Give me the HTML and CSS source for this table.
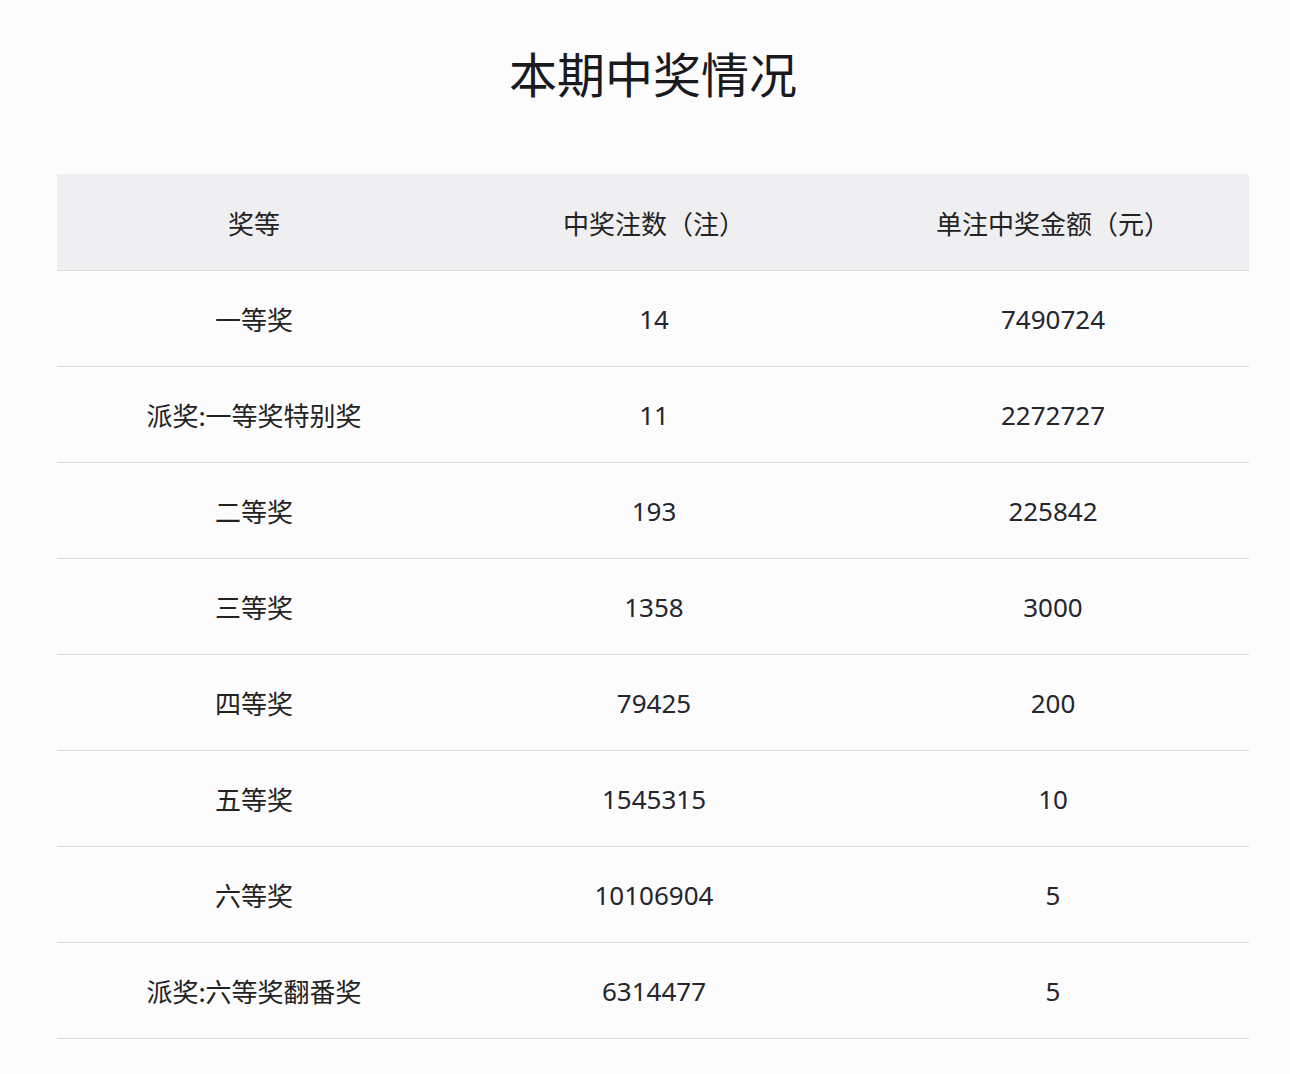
FILE: index.html
```html
<!DOCTYPE html>
<html lang="zh-CN">
<head>
<meta charset="utf-8">
<title>本期中奖情况</title>
<link rel="stylesheet" href="styles.css">
</head>
<body>
<div class="page">
  <h1 class="title">本期中奖情况</h1>
  <table class="prize-table">
    <colgroup>
      <col class="c1"><col class="c2"><col class="c3">
    </colgroup>
    <thead>
      <tr><th>奖等</th><th>中奖注数（注）</th><th>单注中奖金额（元）</th></tr>
    </thead>
    <tbody>
      <tr><td>一等奖</td><td>14</td><td>7490724</td></tr>
      <tr><td>派奖:一等奖特别奖</td><td>11</td><td>2272727</td></tr>
      <tr><td>二等奖</td><td>193</td><td>225842</td></tr>
      <tr><td>三等奖</td><td>1358</td><td>3000</td></tr>
      <tr><td>四等奖</td><td>79425</td><td>200</td></tr>
      <tr><td>五等奖</td><td>1545315</td><td>10</td></tr>
      <tr><td>六等奖</td><td>10106904</td><td>5</td></tr>
      <tr><td>派奖:六等奖翻番奖</td><td>6314477</td><td>5</td></tr>
    </tbody>
  </table>
</div>
</body>
</html>
```
FILE: styles.css
```css
html, body {
  margin: 0;
  padding: 0;
  background: #fcfcfd;
}
body {
  font-family: "Noto Sans", "Noto Sans CJK SC", sans-serif;
  color: #24252d;
}
.page {
  padding: 40px 41px 0 57px;
}
.title {
  margin: 0;
  text-align: center;
  font-family: "Noto Sans CJK SC", sans-serif;
  font-weight: 400;
  font-size: 48px;
  line-height: 64px;
  color: #1a1a1e;
}
.prize-table {
  margin-top: 70px;
  width: 1192px;
  border-collapse: collapse;
  table-layout: fixed;
}
.c1 { width: 394px; }
.c2 { width: 406px; }
.c3 { width: 392px; }
.prize-table th,
.prize-table td {
  height: 95px;
  padding: 0;
  text-align: center;
  vertical-align: middle;
  font-size: 26px;
  font-weight: 400;
  border-bottom: 1px solid #dcdcde;
}
.prize-table th {
  height: 96px;
  background: #efeff1;
  font-family: "Noto Sans CJK SC", sans-serif;
  color: #222;
}
.prize-table td:first-child {
  font-family: "Noto Sans CJK SC", sans-serif;
  color: #222;
}
```
